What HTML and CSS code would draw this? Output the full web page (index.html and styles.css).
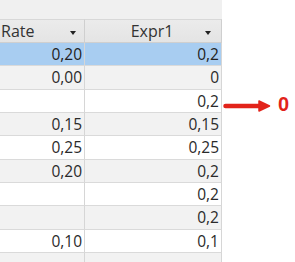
FILE: index.html
```html
<!DOCTYPE html>
<html>
<head>
<meta charset="utf-8">
<link rel="stylesheet" href="styles.css">
</head>
<body>
<div class="page">
  <div class="sheet">
    <div class="band"></div>
    <div class="grid">
      <div class="hd hd-left"><span>Rate</span><i class="dd"></i></div>
      <div class="hd hd-center"><span>Expr1</span><i class="dd"></i></div>

      <div class="c sel">0,20</div><div class="c sel">0,2</div>
      <div class="c alt">0,00</div><div class="c alt">0</div>
      <div class="c"></div><div class="c">0,2</div>
      <div class="c alt">0,15</div><div class="c alt">0,15</div>
      <div class="c">0,25</div><div class="c">0,25</div>
      <div class="c alt">0,20</div><div class="c alt">0,2</div>
      <div class="c"></div><div class="c">0,2</div>
      <div class="c alt"></div><div class="c alt">0,2</div>
      <div class="c">0,10</div><div class="c">0,1</div>
      <div class="c alt"></div><div class="c alt"></div>
    </div>
  </div>
  <div class="note">
    <svg width="48" height="12" viewBox="0 0 48 12">
      <line x1="2.5" y1="6" x2="38" y2="6" stroke="#e2231a" stroke-width="4.5" stroke-linecap="round"/>
      <path d="M36 1 L46.5 6 L36 11 Z" fill="#e2231a" stroke="#e2231a" stroke-width="1.5" stroke-linejoin="round"/>
    </svg>
    <span class="zero">0</span>
  </div>
</div>
</body>
</html>
```
FILE: styles.css
```css
html, body {
  margin: 0;
  padding: 0;
  background: #ffffff;
}
.page {
  position: relative;
  width: 295px;
  height: 262px;
  overflow: hidden;
  font-family: "Open Sans", "DejaVu Sans", sans-serif;
  color: #222;
}
.sheet {
  width: 222px;
}
.band {
  height: 19px;
  background: #f0f0f0;
}
.grid {
  display: grid;
  grid-template-columns: 85px 137px;
}
.hd {
  height: 24px;
  box-sizing: border-box;
  background: linear-gradient(#ebebeb, #e4e4e4);
  border-top: 1px solid #d8d8d8;
  border-bottom: 1px solid #cfcfcf;
  border-right: 1px solid #cfcfcf;
  font-size: 16px;
  line-height: 22px;
  display: flex;
  align-items: center;
  position: relative;
  color: #333;
}
.hd-left {
  padding-left: 1px;
}
.hd-center {
  justify-content: center;
  padding-right: 2px;
}
.dd {
  position: absolute;
  right: 8px;
  top: 11px;
  width: 0;
  height: 0;
  border-left: 3px solid transparent;
  border-right: 3px solid transparent;
  border-top: 4px solid #222;
}
.hd-center .dd {
  right: 10px;
}
.c {
  height: 23.33px;
  box-sizing: border-box;
  border-right: 1px solid #d6d6d6;
  border-bottom: 1px solid #dadada;
  font-size: 15.5px;
  line-height: 23px;
  text-align: right;
  padding-right: 2px;
  background: #ffffff;
  color: #2a2a2a;
}
.c.alt {
  background: #f2f2f2;
}
.c.sel {
  background: #a8cdf1;
  color: #222;
}
.note {
  position: absolute;
  left: 223px;
  top: 93px;
  display: flex;
  align-items: center;
  gap: 7px;
}
.note svg {
  display: block;
  margin-top: 3px;
}
.zero {
  font-family: "Liberation Sans", Arial, sans-serif;
  font-weight: bold;
  font-size: 20px;
  line-height: 22px;
  color: #e2231a;
}
```
